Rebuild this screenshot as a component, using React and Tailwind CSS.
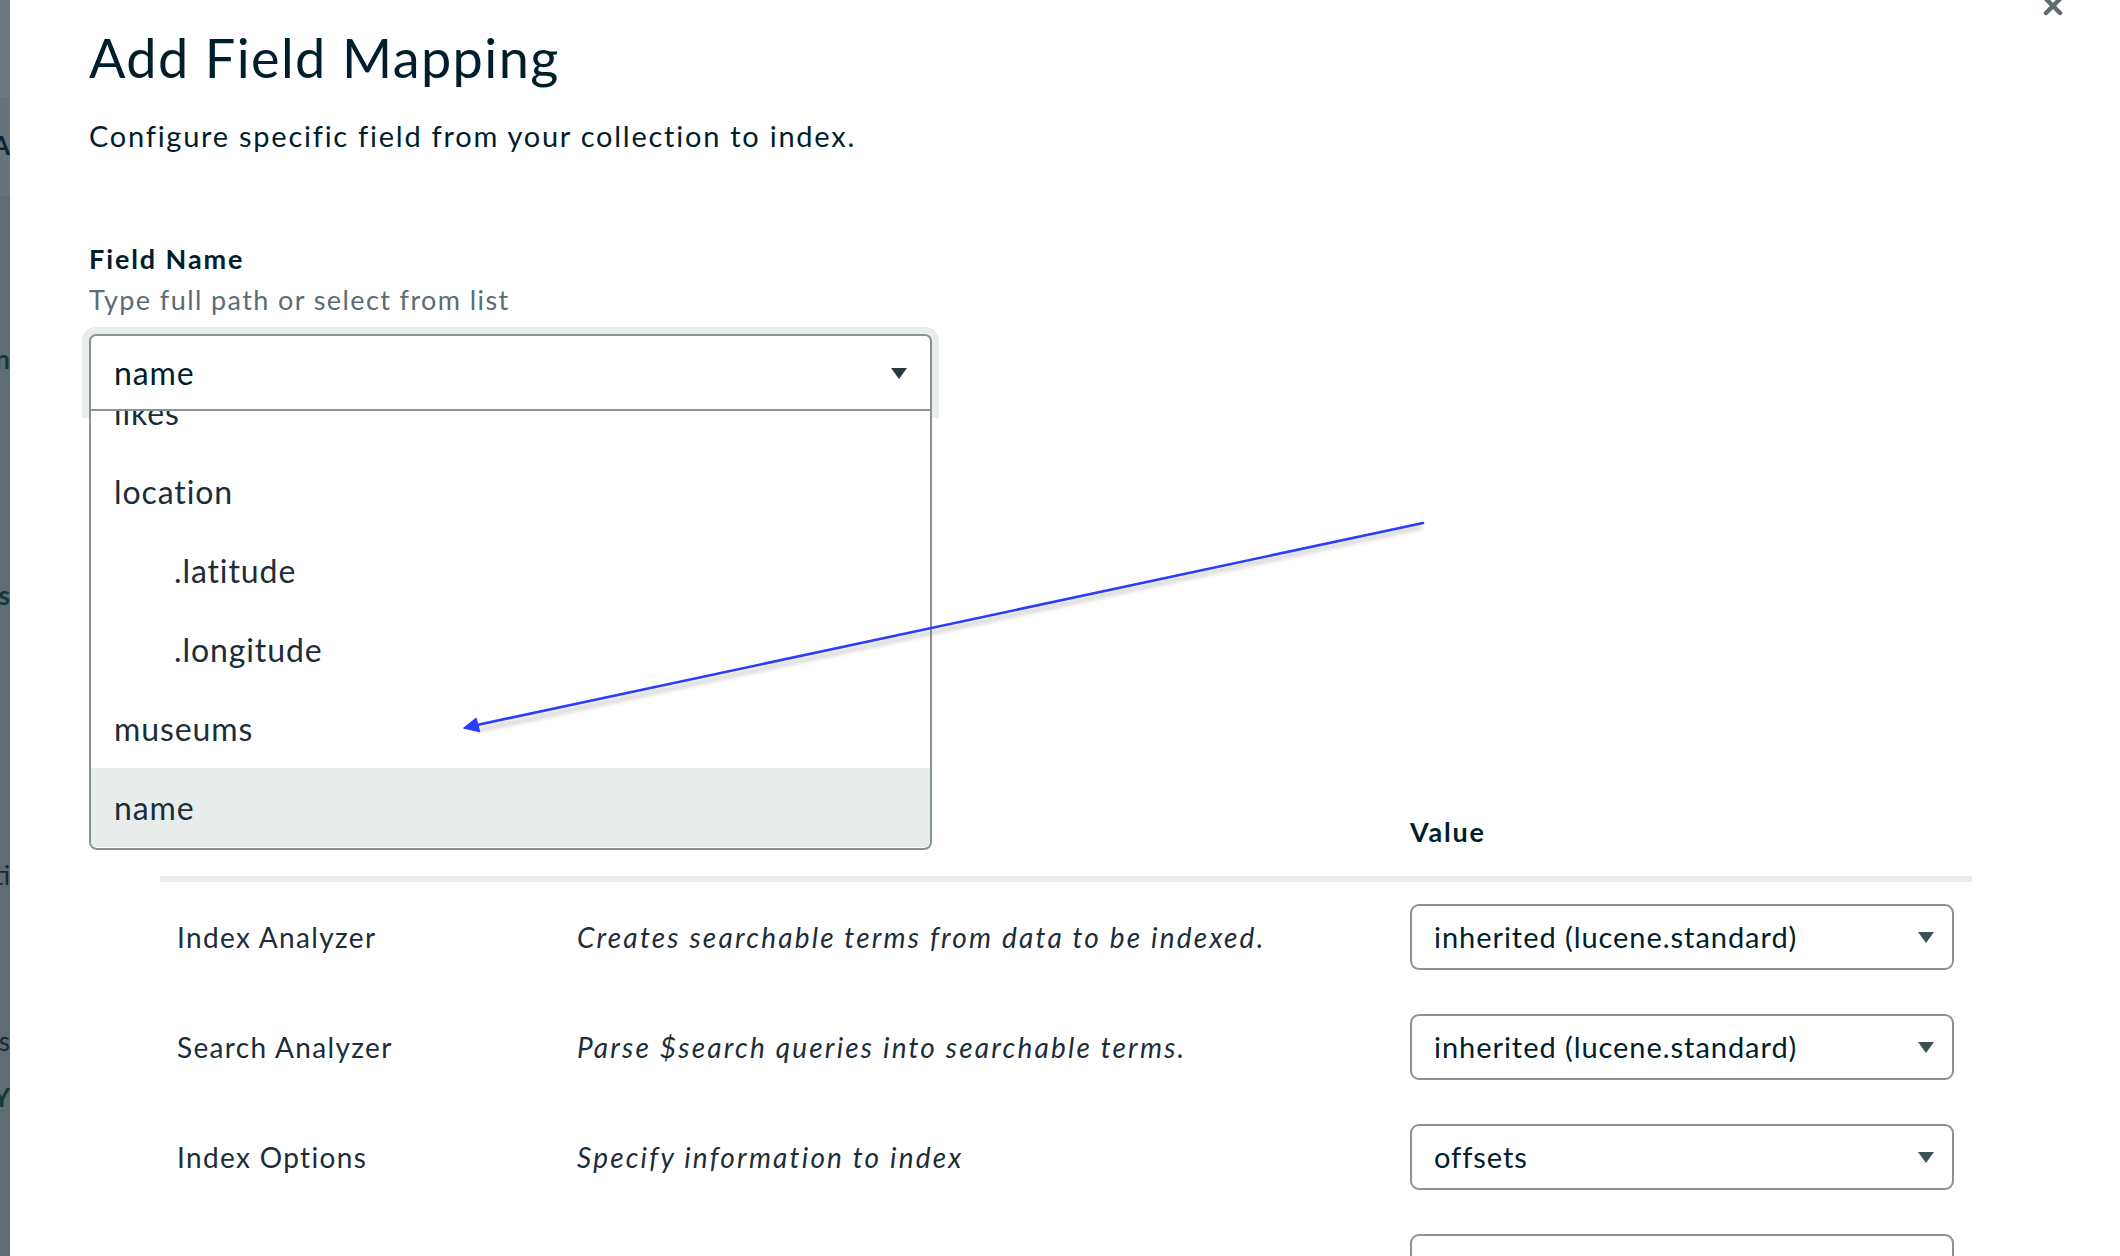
const font = { fontFamily: 'Lato, "Noto Sans", sans-serif' };

const fields = [
  { label: 'likes' },
  { label: 'location' },
  { label: '.latitude', child: true },
  { label: '.longitude', child: true },
  { label: 'museums' },
  { label: 'name', active: true },
];

const rows = [
  { name: 'Index Analyzer', desc: 'Creates searchable terms from data to be indexed.', value: 'inherited (lucene.standard)' },
  { name: 'Search Analyzer', desc: 'Parse $search queries into searchable terms.', value: 'inherited (lucene.standard)' },
  { name: 'Index Options', desc: 'Specify information to index', value: 'offsets' },
  { name: 'Store', desc: 'Indicate whether to store the exact document text', value: 'true' },
];

function Caret({ className }) {
  return (
    <svg width="16" height="11" viewBox="0 0 16 11" className={className}>
      <path d="M0 0 H16 L8 11 Z" fill="currentColor" />
    </svg>
  );
}

function Backdrop() {
  // the dimmed page peeking out behind the modal
  const bits = [
    { t: 'A', mt: 'mt-[132px]', c: 'text-[#0f2430] font-bold' },
    { t: 'n', mt: 'mt-[188px]', c: 'text-[#123a36] font-bold' },
    { t: 's', mt: 'mt-[210px]', c: 'text-[#123a36] font-bold' },
    { t: 'ti', mt: 'mt-[254px]', c: 'text-[#1a2a33]' },
    { t: 'es', mt: 'mt-[140px]', c: 'text-[#1a2a33]' },
    { t: 'Y', mt: 'mt-[30px]', c: 'text-[#0f3b34] font-bold' },
  ];
  return (
    <div className="w-[10px] h-full bg-[#5f6d72] flex flex-col shrink-0 overflow-hidden">
      <div className="h-[96px] bg-[#6a777c] shrink-0" />
      <div className="h-[100px] bg-[#66747a] border-t border-[#73808580] shrink-0 -mb-[196px]" />
      {bits.map((b, i) => (
        <div key={i} className={`${b.mt} w-[10px] overflow-hidden flex justify-end shrink-0`}>
          <span className={`whitespace-nowrap text-[26px] leading-[26px] ${b.c}`} style={font}>{b.t}</span>
        </div>
      ))}
    </div>
  );
}

export default function App() {
  return (
    <div className="w-[2120px] h-[1256px] overflow-hidden flex bg-white relative" style={font}>
      <Backdrop />

      <div className="flex-1 relative bg-white pl-[79px] pt-[31px]">
        {/* close */}
        <svg width="22" height="22" viewBox="0 0 22 22" className="absolute left-[2032px] -top-[5px]">
          <path d="M4 4 L18 18 M18 4 L4 18" stroke="#5c6c75" strokeWidth="4.5" strokeLinecap="round" />
        </svg>

        <h1 className="text-[54px] leading-[54px] text-[#001e2b] tracking-[1.4px]">Add Field Mapping</h1>
        <p className="mt-[37px] text-[29px] leading-[28px] text-[#001e2b] tracking-[1.75px]">
          Configure specific field from your collection to index.
        </p>

        <div className="mt-[96px] text-[27px] leading-[26px] font-bold text-[#001e2b] tracking-[1.9px]">Field Name</div>
        <div className="mt-[15px] text-[27px] leading-[26px] text-[#5c6c75] tracking-[1.4px]">Type full path or select from list</div>

        {/* combobox */}
        <div className="relative mt-[21px] w-[843px]">
          <div className="h-[77px] rounded-t-[7px] border-2 border-[#889397] bg-white flex items-center justify-between pl-[23px] pr-[23px] shadow-[0_0_0_7px_#e8edeb]">
            <span className="text-[32px] text-[#001e2b] tracking-[0.9px]">name</span>
            <Caret className="text-[#2b3a42] mt-[2px]" />
          </div>
          <div className="absolute left-0 right-0 top-full h-[439px] border-2 border-t-0 border-[#889397] rounded-b-[8px] bg-white overflow-hidden z-10">
            <div className="-mt-[38px] flex flex-col">
              {fields.map((f) => (
                <div
                  key={f.label}
                  className={`h-[79px] shrink-0 flex items-center text-[32px] tracking-[0.9px] text-[#1c2d38] ${f.child ? 'pl-[83px]' : 'pl-[23px]'} ${f.active ? 'bg-[#e8edeb]' : ''}`}
                >
                  {f.label}
                </div>
              ))}
            </div>
          </div>
        </div>

        {/* options table */}
        <div className="mt-[408px] ml-[71px] w-[1812px]">
          <div className="grid grid-cols-[400px_833px_1fr] pl-[17px] pb-[31px]">
            <div />
            <div />
            <div className="text-[27px] leading-[26px] font-bold text-[#001e2b] tracking-[1.8px]">Value</div>
          </div>
          <div className="h-[6px] bg-[#e8edeb]" />
          {rows.map((r) => (
            <div key={r.name} className="grid grid-cols-[400px_833px_1fr] pl-[17px] h-[110px] items-center">
              <div className="text-[28px] text-[#1c2d38] tracking-[1.35px]">{r.name}</div>
              <div className="text-[28px] italic text-[#1c2d38] tracking-[2.2px] whitespace-nowrap">{r.desc}</div>
              <div className="w-[544px] h-[66px] rounded-[9px] border-2 border-[#889397] flex items-center justify-between pl-[22px] pr-[18px]">
                <span className="text-[29px] text-[#001e2b] tracking-[0.95px]">{r.value}</span>
                <Caret className="text-[#3d4f58]" />
              </div>
            </div>
          ))}
        </div>
      </div>

      {/* annotation arrow */}
      <svg width="2120" height="1256" className="absolute left-0 top-0 pointer-events-none z-20">
        <defs>
          <filter id="sh" x="-5%" y="-50%" width="110%" height="200%">
            <feGaussianBlur stdDeviation="2" />
          </filter>
        </defs>
        <line x1="1422" y1="527" x2="478" y2="730" stroke="#000" strokeOpacity="0.18" strokeWidth="4" filter="url(#sh)" />
        <line x1="1423" y1="523" x2="477" y2="725" stroke="#2a3cff" strokeWidth="2.6" strokeLinecap="round" />
        <path d="M464 728 L479.5 731.5 L476 718.5 Z" fill="#2a3cff" stroke="#2a3cff" strokeWidth="1.5" strokeLinejoin="round" />
      </svg>
    </div>
  );
}
